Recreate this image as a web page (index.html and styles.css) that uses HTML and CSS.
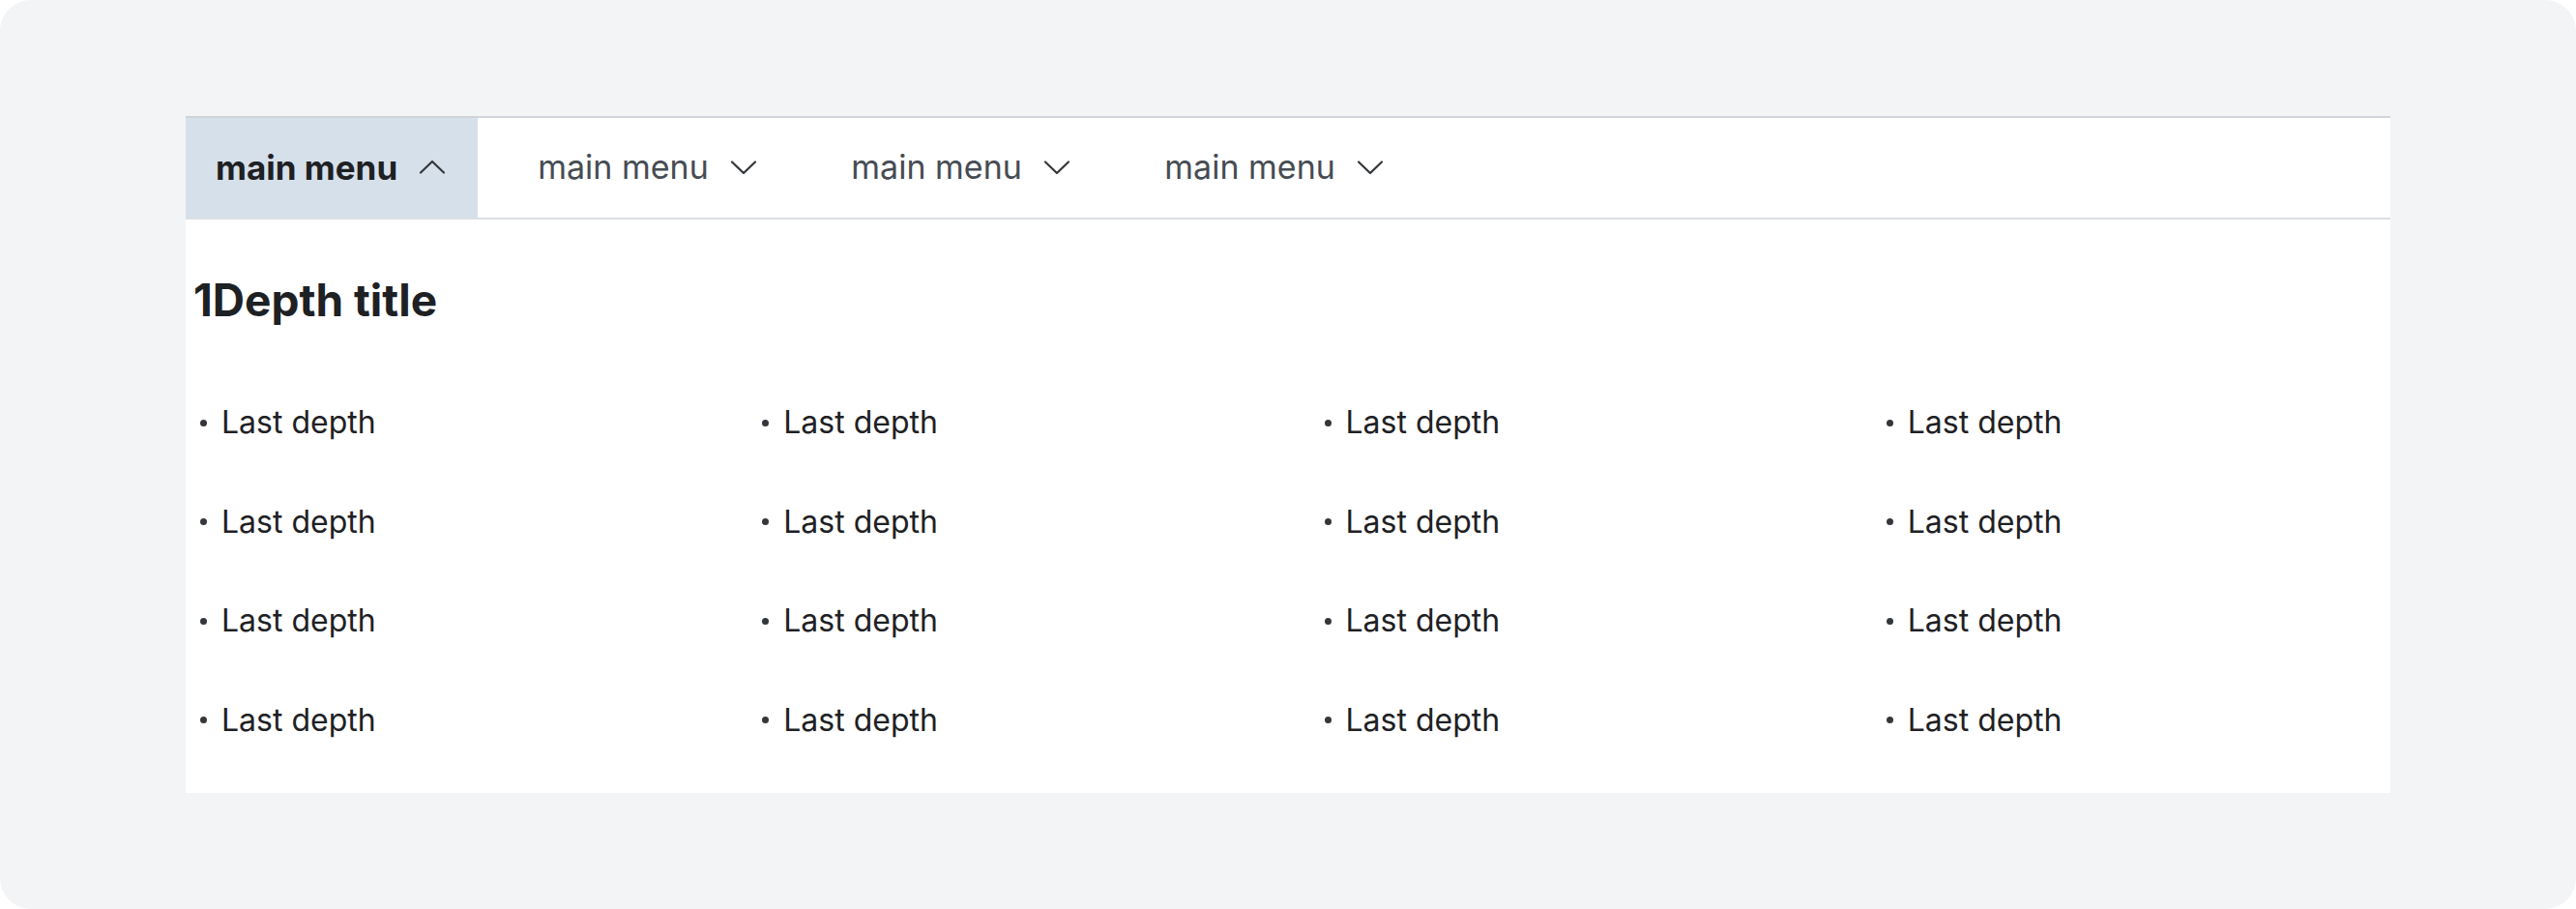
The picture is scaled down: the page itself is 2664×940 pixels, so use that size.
FILE: index.html
```html
<!DOCTYPE html>
<html lang="en">
<head>
<meta charset="utf-8">
<title>Mega menu</title>
<link rel="stylesheet" href="styles.css">
</head>
<body>
<div class="frame">
  <div class="panel">
    <nav class="tabs">
      <button class="tab tab-active" type="button">
        <span class="tab-label">main menu</span>
        <svg class="chev" viewBox="0 0 32 32" aria-hidden="true"><polyline points="4,21.5 16,10 28,21.5"/></svg>
      </button>
      <button class="tab" type="button">
        <span class="tab-label">main menu</span>
        <svg class="chev" viewBox="0 0 32 32" aria-hidden="true"><polyline points="4,10.5 16,22 28,10.5"/></svg>
      </button>
      <button class="tab" type="button">
        <span class="tab-label">main menu</span>
        <svg class="chev" viewBox="0 0 32 32" aria-hidden="true"><polyline points="4,10.5 16,22 28,10.5"/></svg>
      </button>
      <button class="tab" type="button">
        <span class="tab-label">main menu</span>
        <svg class="chev" viewBox="0 0 32 32" aria-hidden="true"><polyline points="4,10.5 16,22 28,10.5"/></svg>
      </button>
    </nav>
    <div class="content">
      <h2 class="title">1Depth title</h2>
      <ul class="links">
        <li>Last depth</li><li>Last depth</li><li>Last depth</li><li>Last depth</li>
        <li>Last depth</li><li>Last depth</li><li>Last depth</li><li>Last depth</li>
        <li>Last depth</li><li>Last depth</li><li>Last depth</li><li>Last depth</li>
        <li>Last depth</li><li>Last depth</li><li>Last depth</li><li>Last depth</li>
      </ul>
    </div>
  </div>
</div>
</body>
</html>
```
FILE: styles.css
```css
* { box-sizing: border-box; }
html, body { margin: 0; padding: 0; background: #ffffff; }
body { font-family: Inter, "Noto Sans", "Liberation Sans", sans-serif; color: #1e2124; }

.frame {
  width: 2664px;
  height: 940px;
  background: #f3f4f6;
  border-radius: 32px;
  padding: 120px 192px 0 192px;
}

.panel {
  background: #ffffff;
}

.tabs {
  display: flex;
  gap: 31px;
  border-top: 2px solid #d0d4d9;
  border-bottom: 2px solid #dcdfe3;
  height: 107px;
}

.tab {
  display: flex;
  align-items: center;
  gap: 20px;
  padding: 0 33.5px 2px 31px;
  border: 0;
  margin: 0;
  background: transparent;
  font-family: inherit;
  font-size: 34px;
  font-weight: 400;
  color: #464c53;
  cursor: pointer;
}

.tab-active {
  padding-right: 31px;
  background: #d6e0ea;
  font-size: 35px;
  font-weight: 700;
  color: #1e2124;
}

.chev {
  width: 32px;
  height: 32px;
  fill: none;
  stroke: #33363a;
  stroke-width: 2.2;
  stroke-linecap: round;
  stroke-linejoin: round;
}

.content {
  padding: 0 8px 56px 8px;
}

.title {
  margin: 57px 0 0 0;
  font-size: 46px;
  line-height: 53px;
  font-weight: 700;
  color: #1e2124;
}

.links {
  list-style: none;
  margin: 81px 0 0 0;
  padding: 0;
  display: grid;
  grid-template-columns: repeat(4, 1fr);
  column-gap: 61px;
  row-gap: 64.5px;
}

.links li {
  display: flex;
  align-items: center;
  gap: 15px;
  font-size: 32px;
  line-height: 38px;
  color: #1e2124;
}

.links li::before {
  content: "";
  width: 7px;
  height: 7px;
  margin-left: 7px;
  border-radius: 50%;
  background: #33363a;
  flex: none;
}
```
